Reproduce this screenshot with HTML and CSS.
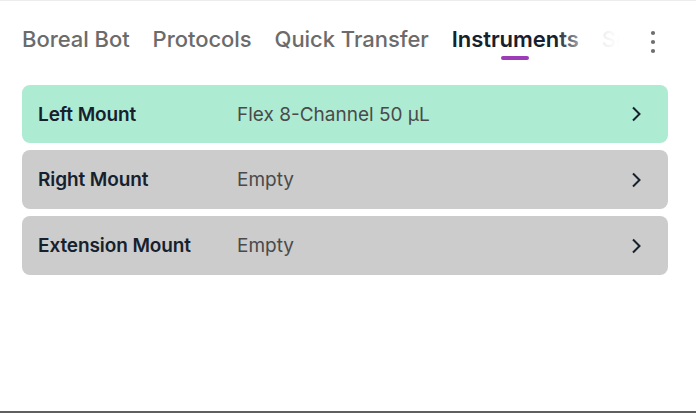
FILE: index.html
```html
<!DOCTYPE html>
<html>
<head>
<meta charset="utf-8">
<link rel="stylesheet" href="styles.css">
</head>
<body>
<div class="screen">
  <div class="topbar">
    <div class="tabs-wrap">
      <div class="tabs">
        <span class="tab">Boreal Bot</span>
        <span class="tab">Protocols</span>
        <span class="tab">Quick Transfer</span>
        <span class="tab active">Instruments</span>
        <span class="tab">Settings</span>
      </div>
      <div class="fade"></div>
    </div>
    <div class="menu">
      <svg width="6" height="24" viewBox="0 0 6 24"><circle cx="3" cy="3" r="2.1" fill="#6e6e6e"/><circle cx="3" cy="12" r="2.1" fill="#6e6e6e"/><circle cx="3" cy="21" r="2.1" fill="#6e6e6e"/></svg>
    </div>
  </div>
  <div class="list">
    <div class="row green">
      <span class="label">Left Mount</span>
      <span class="value">Flex 8-Channel 50 µL</span>
      <svg class="chev" width="10" height="16" viewBox="0 0 10 16"><path d="M2 1.5 L8.5 8 L2 14.5" fill="none" stroke="#16212d" stroke-width="2"/></svg>
    </div>
    <div class="row">
      <span class="label">Right Mount</span>
      <span class="value">Empty</span>
      <svg class="chev" width="10" height="16" viewBox="0 0 10 16"><path d="M2 1.5 L8.5 8 L2 14.5" fill="none" stroke="#16212d" stroke-width="2"/></svg>
    </div>
    <div class="row">
      <span class="label">Extension Mount</span>
      <span class="value">Empty</span>
      <svg class="chev" width="10" height="16" viewBox="0 0 10 16"><path d="M2 1.5 L8.5 8 L2 14.5" fill="none" stroke="#16212d" stroke-width="2"/></svg>
    </div>
  </div>
</div>
</body>
</html>
```
FILE: styles.css
```css
* { box-sizing: border-box; }
html, body { margin: 0; padding: 0; background: #fff; }
body { font-family: "Inter", "Noto Sans", sans-serif; }
.screen {
  width: 696px;
  height: 413px;
  border-top: 1px solid #ececec;
  border-bottom: 2px solid #5f5f5f;
  overflow: hidden;
}
.topbar {
  display: flex;
  align-items: flex-start;
  height: 84px;
  padding-left: 22px;
}
.tabs-wrap {
  position: relative;
  width: 598px;
  overflow: hidden;
  height: 70px;
}
.tabs {
  display: flex;
  gap: 23px;
  white-space: nowrap;
  padding-top: 25px;
}
.tab {
  position: relative;
  font-size: 22px;
  font-weight: 500;
  color: #6b6b6b;
  line-height: 26px;
  letter-spacing: -0.05px;
}
.tab.active {
  color: #16212d;
  font-weight: 600;
}
.tab.active::after {
  content: "";
  position: absolute;
  left: 50%;
  margin-left: -14px;
  top: 30px;
  width: 28px;
  height: 4px;
  border-radius: 2px;
  background: #9c3cb8;
}
.fade {
  position: absolute;
  top: 0;
  right: 0;
  width: 64px;
  height: 100%;
  background: linear-gradient(to right, rgba(255,255,255,0), rgba(255,255,255,0.8) 50%, #fff);
}
.menu {
  margin-left: 30px;
  padding-top: 29px;
  display: flex;
}
.list {
  display: flex;
  flex-direction: column;
  gap: 7px;
  padding: 0 28px 0 22px;
}
.row {
  display: flex;
  align-items: center;
  height: 59px;
  border-radius: 8px;
  background: #cbcccb;
  padding: 0 27px 0 16px;
}
.row.green { background: #aeebd3; height: 58px; }
.label {
  width: 199px;
  font-size: 19px;
  font-weight: 600;
  color: #16212d;
  letter-spacing: -0.1px;
}
.value {
  flex: 1;
  font-size: 19px;
  font-weight: 400;
  color: #4a4a4a;
}
.chev { display: block; }
```
